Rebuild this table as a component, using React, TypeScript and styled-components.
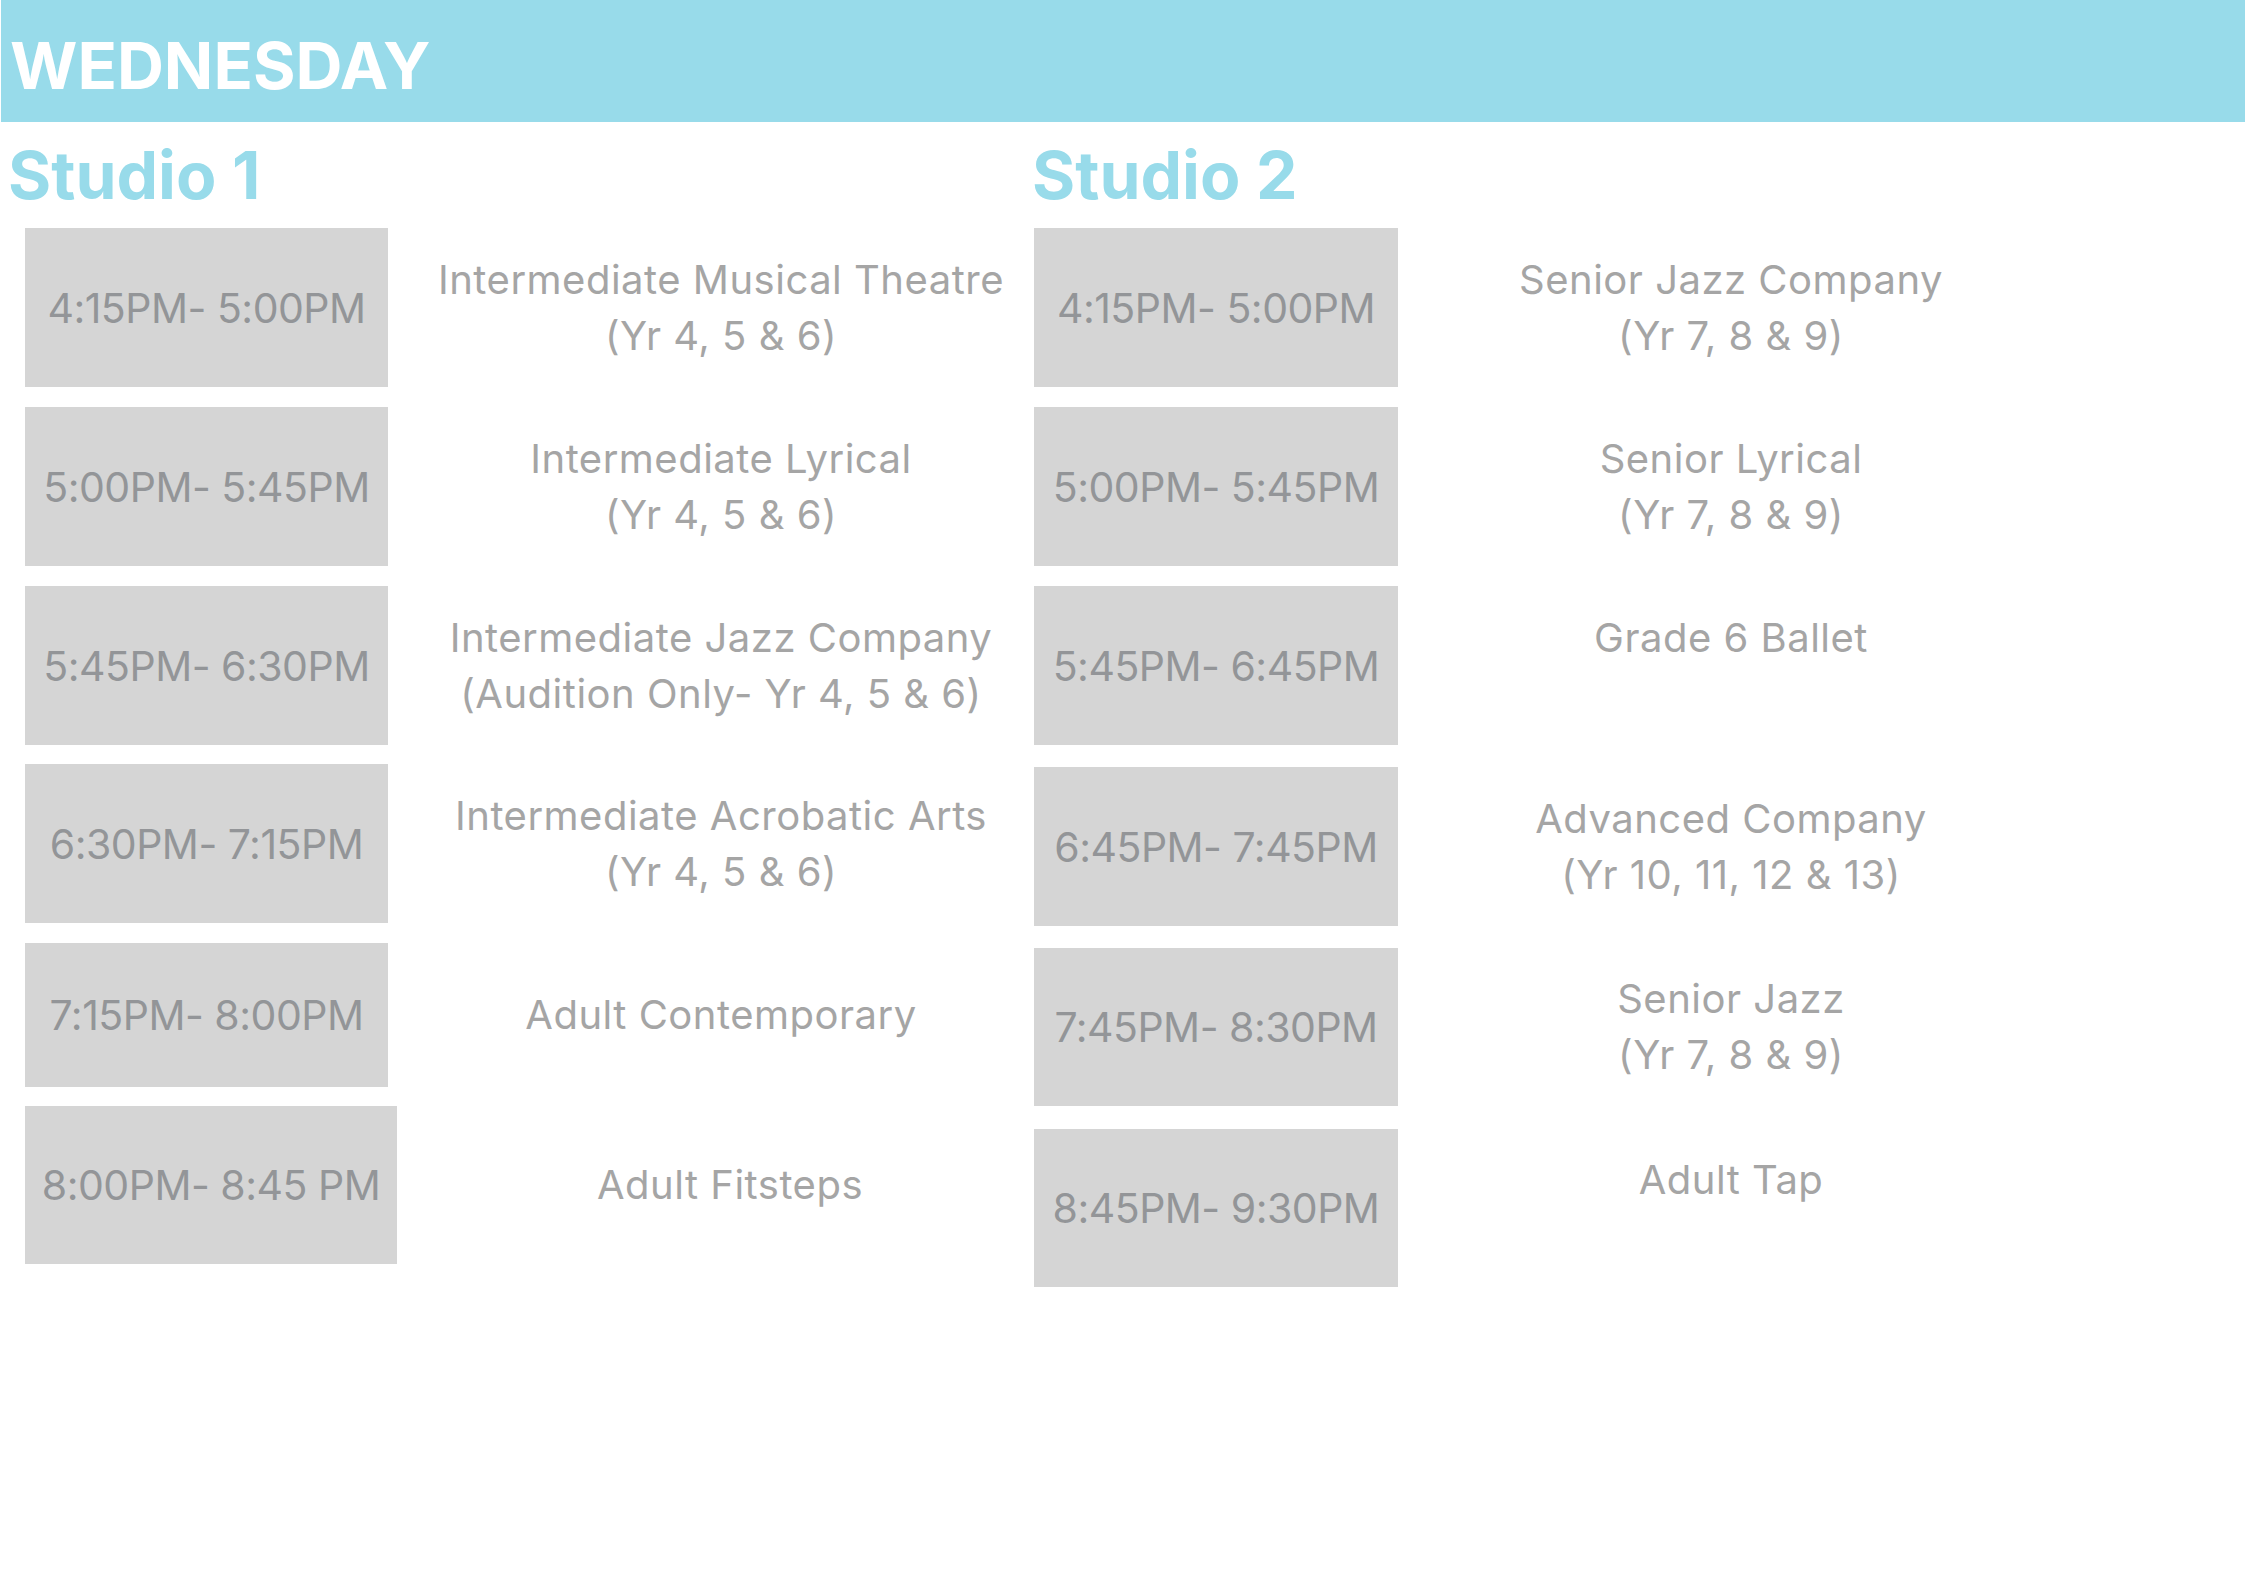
import React from "react";
import styled, { createGlobalStyle } from "styled-components";

const GlobalStyle = createGlobalStyle`
  html, body {
    margin: 0;
    padding: 0;
    background: #ffffff;
  }
  body {
    font-family: Inter, "Noto Sans", sans-serif;
  }
`;

const Page = styled.div`
  width: 2245px;
  min-height: 1587px;
  background: #ffffff;
`;

const DayBar = styled.header`
  box-sizing: border-box;
  height: 122px;
  margin-left: 1px;
  padding: 33px 0 0 9px;
  background: #98dbea;
  color: #ffffff;
  font-size: 65px;
  font-weight: 700;
  line-height: 65px;
`;

const Studios = styled.main`
  display: flex;
  padding: 20px 0 0 8px;
`;

const Studio = styled.section<{ $width?: number }>`
  flex: none;
  width: ${(p) => (p.$width ? `${p.$width}px` : "auto")};
  display: flex;
  flex-direction: column;
`;

const StudioTitle = styled.h2`
  margin: 0;
  height: 66px;
  font-size: 66px;
  line-height: 66px;
  font-weight: 700;
  color: #98dbea;
`;

const Row = styled.div<{ $gap: number; $indent: number }>`
  display: flex;
  align-items: center;
  margin-top: ${(p) => p.$gap}px;
  margin-left: ${(p) => p.$indent}px;
`;

const TimeBox = styled.div<{ $w: number; $h: number }>`
  flex: none;
  width: ${(p) => p.$w}px;
  height: ${(p) => p.$h}px;
  display: flex;
  align-items: center;
  justify-content: center;
  background: #d5d5d5;
  color: #939598;
  font-size: 41px;
  letter-spacing: -0.5px;
  font-weight: 400;
  white-space: nowrap;
`;

const ClassName = styled.div`
  flex: none;
  width: 666px;
  display: flex;
  flex-direction: column;
  align-items: center;
  color: #a5a5a5;
  font-size: 40px;
  letter-spacing: 0.5px;
  line-height: 56px;
  font-weight: 400;
  white-space: nowrap;
`;

type Slot = { time: string; lines: string[]; gap: number; h?: number; w?: number };

const studio1: Slot[] = [
  { time: "4:15PM- 5:00PM", lines: ["Intermediate Musical Theatre", "(Yr 4, 5 & 6)"], gap: 20 },
  { time: "5:00PM- 5:45PM", lines: ["Intermediate Lyrical", "(Yr 4, 5 & 6)"], gap: 20 },
  { time: "5:45PM- 6:30PM", lines: ["Intermediate Jazz Company", "(Audition Only- Yr 4, 5 & 6)"], gap: 20 },
  { time: "6:30PM- 7:15PM", lines: ["Intermediate Acrobatic Arts", "(Yr 4, 5 & 6)"], gap: 19 },
  { time: "7:15PM- 8:00PM", lines: ["Adult Contemporary"], gap: 20, h: 144 },
  { time: "8:00PM- 8:45 PM", lines: ["Adult Fitsteps"], gap: 19, h: 158, w: 372 },
];

const studio2: Slot[] = [
  { time: "4:15PM- 5:00PM", lines: ["Senior Jazz Company", "(Yr 7, 8 & 9)"], gap: 20 },
  { time: "5:00PM- 5:45PM", lines: ["Senior Lyrical", "(Yr 7, 8 & 9)"], gap: 20 },
  { time: "5:45PM- 6:45PM", lines: ["Grade 6 Ballet", "\u00a0"], gap: 20 },
  { time: "6:45PM- 7:45PM", lines: ["Advanced Company", "(Yr 10, 11, 12 & 13)"], gap: 22 },
  { time: "7:45PM- 8:30PM", lines: ["Senior Jazz", "(Yr 7, 8 & 9)"], gap: 22, h: 158 },
  { time: "8:45PM- 9:30PM", lines: ["Adult Tap", "\u00a0"], gap: 23, h: 158 },
];

function StudioColumn({
  title,
  slots,
  indent,
  boxWidth,
  width,
}: {
  title: string;
  slots: Slot[];
  indent: number;
  boxWidth: number;
  width?: number;
}) {
  return (
    <Studio $width={width}>
      <StudioTitle>{title}</StudioTitle>
      {slots.map((slot, index) => (
        <Row key={index} $gap={slot.gap} $indent={indent}>
          <TimeBox $w={slot.w ?? boxWidth} $h={slot.h ?? 159}>
            {slot.time}
          </TimeBox>
          <ClassName>
            {slot.lines.map((line, i) => (
              <span key={i}>{line}</span>
            ))}
          </ClassName>
        </Row>
      ))}
    </Studio>
  );
}

export default function App() {
  return (
    <Page>
      <GlobalStyle />
      <DayBar>WEDNESDAY</DayBar>
      <Studios>
        <StudioColumn title="Studio 1" slots={studio1} indent={17} boxWidth={363} width={1024} />
        <StudioColumn title="Studio 2" slots={studio2} indent={2} boxWidth={364} />
      </Studios>
    </Page>
  );
}
